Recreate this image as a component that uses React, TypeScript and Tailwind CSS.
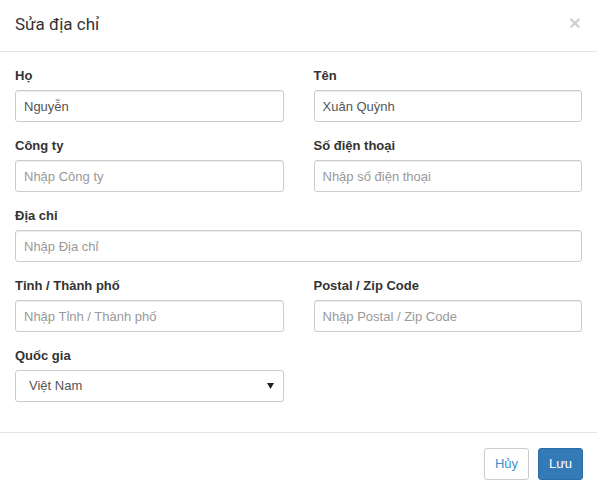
import React from "react";

function Field({ label, value, placeholder, full }: { label: string; value?: string; placeholder?: string; full?: boolean }) {
  return (
    <div className={`mb-[15px] ${full ? "col-span-2" : ""}`}>
      <label className="block h-[18px] mb-[5px] text-[13px] leading-[18px] font-bold text-[#333]">{label}</label>
      <input
        readOnly
        value={value ?? ""}
        placeholder={placeholder}
        className="block w-full h-[32px] px-[8px] text-[13px] text-[#555] placeholder:text-[#999] border border-[#ccc] rounded-[3px] bg-white outline-none shadow-[inset_0_1px_1px_rgba(0,0,0,0.075)]"
      />
    </div>
  );
}

export default function App() {
  return (
    <div className="w-[597px] h-[494px] bg-white overflow-hidden" style={{ fontFamily: '"Liberation Sans", Arial, sans-serif' }}>
      <div className="flex items-center justify-between h-[52px] px-[15px] border-b border-[#e5e5e5]">
        <h4 className="text-[17px] leading-[21px] text-[#333] font-[Roboto,sans-serif] -mt-[2px]">Sửa địa chỉ</h4>
        <span className="text-[21px] font-bold leading-none text-black/20 mr-[1px] -mt-[6px]">×</span>
      </div>
      <div className="p-[15px] pb-[15px]">
        <div className="grid grid-cols-2 gap-x-[30px]">
          <Field label="Họ" value="Nguyễn" />
          <Field label="Tên" value="Xuân Quỳnh" />
          <Field label="Công ty" placeholder="Nhập Công ty" />
          <Field label="Số điện thoại" placeholder="Nhập số điện thoại" />
          <Field label="Địa chỉ" placeholder="Nhập Địa chỉ" full />
          <Field label="Tỉnh / Thành phố" placeholder="Nhập Tỉnh / Thành phố" />
          <Field label="Postal / Zip Code" placeholder="Nhập Postal / Zip Code" />
          <div className="mb-[15px]">
            <label className="block h-[18px] mb-[5px] text-[13px] leading-[18px] font-bold text-[#333]">Quốc gia</label>
            <div className="relative flex items-center h-[32px] pl-[13px] pr-[8px] border border-[#ccc] rounded-[3px] bg-white text-[13px] text-[#555]">
              <span className="flex-1">Việt Nam</span>
              <svg width="7" height="6" viewBox="0 0 7 6" className="mr-[1px]">
                <path d="M0 0 H7 L3.5 6 Z" fill="#222" />
              </svg>
            </div>
          </div>
        </div>
      </div>
      <div className="flex justify-end gap-[9px] px-[14px] pt-[15px] border-t border-[#e5e5e5]">
        <button className="h-[32px] w-[45px] text-[13px] text-[#3c8fd0] bg-white border border-[#ccc] rounded-[3px]">Hủy</button>
        <button className="h-[32px] w-[45px] text-[13px] text-white bg-[#337ab7] border border-[#2e6da4] rounded-[3px]">Lưu</button>
      </div>
    </div>
  );
}
